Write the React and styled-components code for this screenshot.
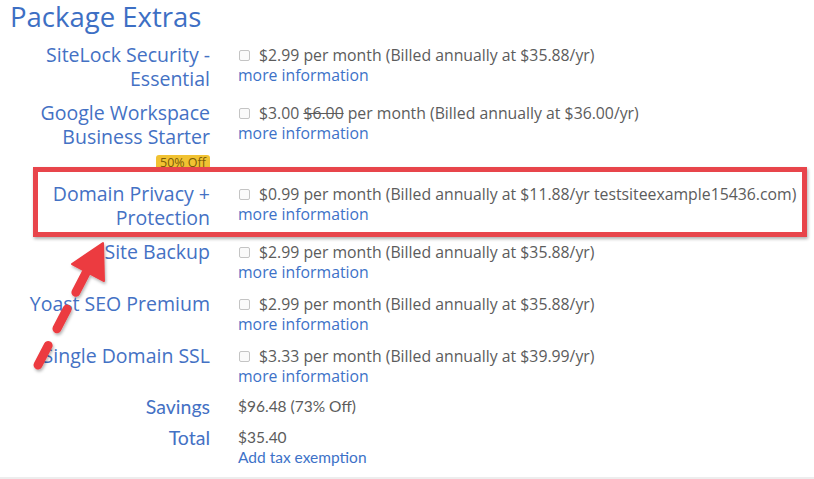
import React from "react";
import styled, { createGlobalStyle } from "styled-components";

const Global = createGlobalStyle`
  html, body { margin: 0; padding: 0; background: #fff; }
  body { font-family: "Open Sans", "DejaVu Sans", sans-serif; }
`;

const Page = styled.div`
  position: relative;
  width: 814px;
  height: 477px;
  border-bottom: 2px solid #ededed;
  overflow: hidden;
  box-sizing: content-box;
`;

const Title = styled.h1`
  margin: 0 0 0 10px;
  font-size: 27.5px;
  line-height: 34px;
  font-weight: 400;
  color: #3d6fc4;
`;

const List = styled.div`
  margin-top: 9px;
  display: flex;
  flex-direction: column;
  gap: 10px;
`;

const Row = styled.div`
  position: relative;
  display: grid;
  grid-template-columns: 210px 1fr;
  column-gap: 28px;
  align-items: start;
`;

const LabelCol = styled.div`
  display: flex;
  flex-direction: column;
  align-items: flex-end;
`;

const Label = styled.div`
  text-align: right;
  font-size: 19.5px;
  line-height: ${(p) => (p.$summary ? "21px" : "24px")};
  font-family: ${(p) =>
    p.$summary ? '"Lato", "Open Sans", sans-serif' : '"Open Sans", sans-serif'};
  color: #4471c4;
`;

const Badge = styled.span`
  margin: 6px 0 1px;
  height: 16px;
  padding: 0 4px;
  border-radius: 3px;
  background: #f1c232;
  color: #7b5b08;
  font-size: 12.5px;
  line-height: 16px;
`;

const Value = styled.div`
  padding: ${(p) => (p.$summary ? "0" : "2px 0 0")};
  font-size: ${(p) => (p.$summary ? "15.5px" : "15.8px")};
  line-height: 20px;
  font-family: ${(p) =>
    p.$summary ? '"Lato", "Open Sans", sans-serif' : '"Open Sans", sans-serif'};
  color: #5c5c5c;
  white-space: nowrap;
`;

const PriceLine = styled.div`
  display: flex;
  align-items: center;
`;

const Check = styled.span`
  display: inline-block;
  width: 9px;
  height: 9px;
  margin: 1px 9px 0 1px;
  border: 1px solid #c4c4c4;
  border-radius: 2px;
  background: #fafafa;
`;

const Strike = styled.s`
  margin-right: 4px;
`;

const Link = styled.a`
  display: block;
  color: #3d72c8;
  text-decoration: none;
  font-size: ${(p) => (p.$summary ? "15.5px" : "15.8px")};
`;

const Highlight = styled.div`
  position: absolute;
  left: 33px;
  right: 7px;
  top: -15px;
  bottom: -7px;
  border: 5px solid #e8454b;
  box-shadow: 1px 2px 3px rgba(0, 0, 0, 0.3);
  pointer-events: none;
`;

const Overlay = styled.svg`
  position: absolute;
  left: 0;
  top: 0;
  width: 814px;
  height: 479px;
  pointer-events: none;
`;

const extras = [
  {
    label: ["SiteLock Security -", "Essential"],
    price: "$2.99",
    note: "per month (Billed annually at $35.88/yr)",
  },
  {
    label: ["Google Workspace", "Business Starter"],
    price: "$3.00",
    old: "$6.00",
    note: "per month (Billed annually at $36.00/yr)",
    badge: "50% Off",
  },
  {
    label: ["Domain Privacy +", "Protection"],
    price: "$0.99",
    note: "per month (Billed annually at $11.88/yr testsiteexample15436.com)",
    highlight: true,
  },
  {
    label: ["Site Backup"],
    price: "$2.99",
    note: "per month (Billed annually at $35.88/yr)",
  },
  {
    label: ["Yoast SEO Premium"],
    price: "$2.99",
    note: "per month (Billed annually at $35.88/yr)",
  },
  {
    label: ["Single Domain SSL"],
    price: "$3.33",
    note: "per month (Billed annually at $39.99/yr)",
  },
];

function Arrow() {
  return (
    <Overlay viewBox="0 0 814 479">
      <defs>
        <filter id="sh" x="-20%" y="-20%" width="140%" height="140%">
          <feDropShadow dx="1" dy="2" stdDeviation="1.5" floodColor="#000" floodOpacity="0.3" />
        </filter>
      </defs>
      <g filter="url(#sh)" fill="#ec3b40" stroke="#ec3b40">
        <line
          x1="38"
          y1="365"
          x2="87"
          y2="271"
          strokeWidth="9"
          strokeLinecap="round"
          strokeDasharray="22 19"
          fill="none"
        />
        <polygon points="103,243 104,281 72,264" strokeWidth="2" strokeLinejoin="round" />
      </g>
    </Overlay>
  );
}

export default function App() {
  return (
    <Page>
      <Global />
      <Title>Package Extras</Title>
      <List>
        {extras.map((e) => (
          <Row key={e.label.join(" ")}>
            <LabelCol>
              {e.label.map((l) => (
                <Label key={l}>{l}</Label>
              ))}
              {e.badge && <Badge>{e.badge}</Badge>}
            </LabelCol>
            <Value>
              <PriceLine>
                <Check />
                {e.price}&nbsp;
                {e.old && <Strike>{e.old}</Strike>}
                {e.note}
              </PriceLine>
              <Link href="#">more information</Link>
            </Value>
            {e.highlight && <Highlight />}
          </Row>
        ))}
        <Row>
          <LabelCol>
            <Label $summary>Savings</Label>
          </LabelCol>
          <Value $summary>$96.48 (73% Off)</Value>
        </Row>
        <Row>
          <LabelCol>
            <Label $summary>Total</Label>
          </LabelCol>
          <Value $summary>
            $35.40
            <Link href="#" $summary>
              Add tax exemption
            </Link>
          </Value>
        </Row>
      </List>
      <Arrow />
    </Page>
  );
}
